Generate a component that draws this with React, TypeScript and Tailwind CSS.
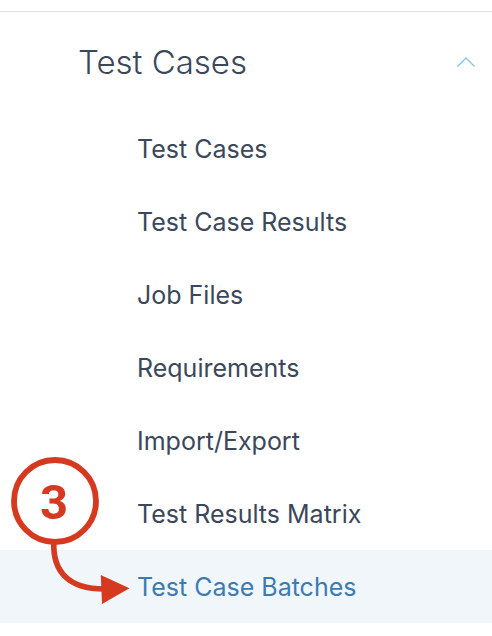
import { useState } from "react";

const items = [
  "Test Cases",
  "Test Case Results",
  "Job Files",
  "Requirements",
  "Import/Export",
  "Test Results Matrix",
  "Test Case Batches",
];

const StepMarker = ({ step }: { step: number }) => {
  return (
    <div className="pointer-events-none absolute bottom-4 left-2 h-[152px] w-[124px]">
      <svg viewBox="0 0 124 152" className="h-full w-full" fill="none">
        <circle cx="47" cy="46" r="41" fill="#fff" stroke="#d53a20" strokeWidth="5.8" />
        <path
          d="M45.8 88 C45 116 60 134 96 134"
          stroke="#d53a20"
          strokeWidth="5.6"
        />
        <path d="M92.8 120 L121.5 133.3 L94 149Z" fill="#d53a20" />
        <text
          x="46"
          y="64"
          textAnchor="middle"
          className="fill-[#d53a20] font-[Roboto] text-[49px] font-bold"
        >
          {step}
        </text>
      </svg>
    </div>
  );
};

const App = () => {
  const [open, setOpen] = useState(true);
  const [active, setActive] = useState("Test Case Batches");

  return (
    <nav className="bg-white pt-[11px] font-['Inter',sans-serif] text-[#3b475a]">
      <button
        onClick={() => setOpen(!open)}
        aria-expanded={open}
        className="flex h-[101px] w-full items-center justify-between border-t border-[#dfe1e4] pr-4 pl-[78px] text-left text-[33px] font-light"
      >
        <span className="pt-0.5">Test Cases</span>
        <svg
          viewBox="0 0 20 12"
          className={`h-3 w-5 ${open ? "" : "rotate-180"}`}
          fill="none"
          stroke="#7cc8ec"
          strokeWidth="1.3"
        >
          <path d="M1.5 10.5 L10 2 L18.5 10.5" />
        </svg>
      </button>
      {open && (
        <div className="relative">
          <ul>
            {items.map((item) => (
              <li key={item}>
                <a
                  href="#"
                  onClick={() => setActive(item)}
                  className={`flex h-[73px] items-center pt-0.5 pl-[137px] text-[25px] ${
                    active === item ? "bg-[#f1f6fb] text-[#3b7bb2]" : ""
                  }`}
                >
                  {item}
                </a>
              </li>
            ))}
          </ul>
          <StepMarker step={3} />
        </div>
      )}
    </nav>
  );
};

export default App;
